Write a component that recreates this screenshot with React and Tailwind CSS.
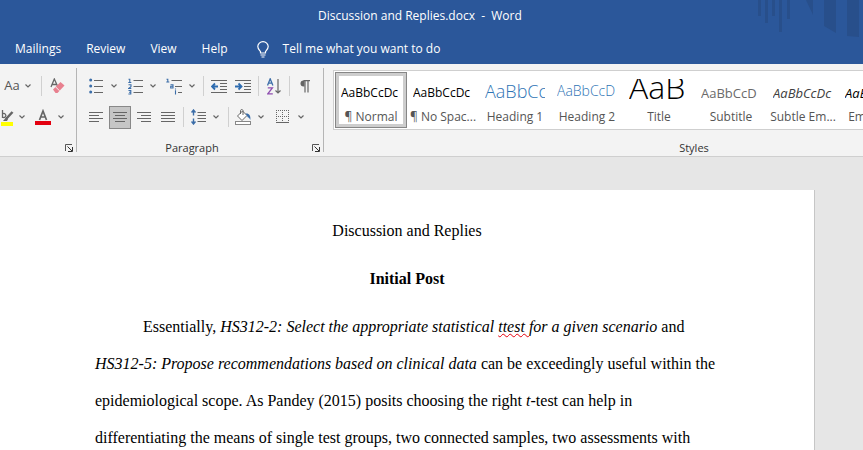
import React from "react"

const tabs = ["Mailings", "Review", "View", "Help"]

const styles = [
    { name: "¶ Normal", sample: "AaBbCcDc", look: "text-[12px] leading-7 text-black", selected: true },
    { name: "¶ No Spac...", sample: "AaBbCcDc", look: "text-[12px] leading-7 text-black" },
    { name: "Heading 1", sample: "AaBbCc", look: "text-[18px] leading-6 font-light text-[#2e74b5]" },
    { name: "Heading 2", sample: "AaBbCcD", look: "text-[14px] leading-6 font-light text-[#2e74b5]" },
    { name: "Title", sample: "AaB", look: "text-[32px] leading-4 font-light text-black" },
    { name: "Subtitle", sample: "AaBbCcD", look: "text-[13px] leading-7 text-[#6a6a6a]" },
    { name: "Subtle Em...", sample: "AaBbCcDc", look: "text-[13px] leading-7 italic text-[#404040]" },
    { name: "Emphasis", sample: "AaBbCcDc", look: "text-[13px] leading-7 italic text-black" },
]

const Separator = () => <div className="h-5 w-px bg-[#d0d0d0]"></div>

const Chevron = ({ label }) => (
    <button aria-label={label} className="flex h-[22px] w-4 items-center justify-center">
        <svg width="6" height="4" viewBox="0 0 6 4" fill="none" stroke="#666" strokeWidth="1.2">
            <path d="M0.5 0.5L3 3L5.5 0.5" />
        </svg>
    </button>
)

const Tool = ({ label, width = "w-5", active, children }) => (
    <button
        aria-label={label}
        className={`flex h-[23px] shrink-0 items-center justify-center ${width} ${active ? "border border-[#888] bg-[#c6c6c6]" : ""}`}
    >
        {children}
    </button>
)

const Launcher = ({ label }) => (
    <button aria-label={label} className="absolute right-[3px] bottom-0">
        <svg width="8" height="8" viewBox="0 0 8 8" fill="none" stroke="#555">
            <path d="M0.5 7V0.5H7" />
            <path d="M2.5 2.5L7 7M7.5 3V7.5H3" stroke="#333" />
        </svg>
    </button>
)

const AlignIcon = ({ lines }) => (
    <svg width="14" height="11" viewBox="0 0 14 11" stroke="#666">
        {lines.map(([from, to], i) => (
            <path key={i} d={`M${from} ${i * 3 + 0.5}H${to}`} />
        ))}
    </svg>
)

const BulletsIcon = () => (
    <svg width="14" height="16" viewBox="0 0 14 16">
        <g fill="#3b6da8">
            <circle cx="1.7" cy="2" r="1.5" />
            <circle cx="1.7" cy="8" r="1.5" />
            <circle cx="1.7" cy="14" r="1.5" />
        </g>
        <path d="M5 2.5H14M5 8.5H14M5 14.5H14" stroke="#666" />
    </svg>
)

const NumberingIcon = () => (
    <svg width="15" height="17" viewBox="0 0 15 17">
        <g fill="none" stroke="#3b6da8" strokeWidth="1.1">
            <path d="M0.5 1.2H1.8V4.5M0.3 4.5H3.3" />
            <path d="M0.5 6.8H3V8.6L0.7 10.4H3.3" />
            <path d="M0.5 12.5H2.8V16H0.4M1 14.2H2.8" />
        </g>
        <path d="M5.5 2.5H15M5.5 8.5H15M5.5 14.5H15" stroke="#666" />
    </svg>
)

const MultilevelIcon = () => (
    <svg width="17" height="17" viewBox="0 0 17 17">
        <g fill="none" stroke="#3b6da8" strokeWidth="1.1">
            <path d="M0.5 1.2H1.8V4M0.3 4H3.3" />
            <path d="M4.5 6.7H7V10M7 8.3H4.7V10H7.5" />
            <path d="M9.5 12.3V16.5M9.5 10.5V11.5" />
        </g>
        <path d="M5.5 2.5H16M9 8.5H16M12 14.5H16" stroke="#666" />
    </svg>
)

const IndentIcon = ({ right }) => (
    <svg width="16" height="13" viewBox="0 0 16 13" fill="none">
        <path d="M0 0.5H16M9 3.5H16M9 6.5H16M9 9.5H16M0 12.5H16" stroke="#666" />
        <path d={right ? "M0 6.5H6M3.5 3.5L6.5 6.5L3.5 9.5" : "M1 6.5H7M4 3.5L1 6.5L4 9.5"} stroke="#2e6cb0" strokeWidth="1.8" />
    </svg>
)

const SortIcon = () => (
    <svg width="14" height="17" viewBox="0 0 14 17" fill="none">
        <path d="M0.5 7.5L3.2 0.8L5.9 7.5M1.5 5.2H5" stroke="#3b6da8" strokeWidth="1.3" />
        <path d="M0.8 9.8H5.4L0.8 15.8H5.8" stroke="#8f4fb0" strokeWidth="1.3" />
        <path d="M11 1V15M8.5 12.5L11 15L13.5 12.5" stroke="#666" strokeWidth="1.2" />
    </svg>
)

const PilcrowIcon = () => (
    <svg width="10" height="13" viewBox="0 0 10 13">
        <path d="M4.5 0.5H3.5A3 3 0 0 0 3.5 6.5H4.5Z" fill="#666" />
        <path d="M3.5 0.7H10M5 0.5V12.5M8 0.5V12.5" stroke="#666" strokeWidth="1.2" />
    </svg>
)

const LineSpacingIcon = () => (
    <svg width="15" height="16" viewBox="0 0 15 16" fill="none">
        <path d="M2.5 1V6.5M0.5 3.5L2.5 1L4.5 3.5M2.5 9.5V15M0.5 12.5L2.5 15L4.5 12.5" stroke="#3b6da8" strokeWidth="1.4" />
        <path d="M6.5 3.5H15M6.5 6.5H15M6.5 9.5H15M6.5 12.5H15" stroke="#666" />
    </svg>
)

const ShadingIcon = () => (
    <svg width="17" height="16" viewBox="0 0 17 16" fill="none">
        <path d="M2.5 7L7.5 2L12 6.5L7 11.5Z" fill="#fff" stroke="#666" />
        <path d="M5.5 5V1.5A1.3 1.3 0 0 1 8 1.5V6" stroke="#666" />
        <path d="M10.5 4.5C14 4 16 6.5 15.3 11C14.5 9 13.500 8.5 13 8.5Z" fill="#3b6da8" />
        <rect x="0.5" y="12.5" width="15" height="3" fill="#fff" stroke="#888" />
    </svg>
)

const BordersIcon = () => (
    <svg width="14" height="14" viewBox="0 0 14 14" stroke="#666">
        <path d="M0 0.5H13M0 6.5H13M0.5 0V12M6.5 0V12M12.5 0V12" strokeDasharray="1 1" />
        <path d="M0 12.5H13" />
    </svg>
)

const EraserIcon = () => (
    <svg width="15" height="16" viewBox="0 0 15 16" fill="none">
        <path d="M1 9L4.3 1L7.5 8M2.5 6.5H6.5" stroke="#666" strokeWidth="1.3" />
        <path d="M3 11.5L10.500 4L14.5 7.5L7.5 15H5.5Z" fill="#e8808f" />
        <path d="M5.5 8.8L9.5 12.8" stroke="#f3f3f3" />
    </svg>
)

const HighlighterIcon = () => (
    <svg width="13" height="17" viewBox="0 0 13 17" fill="none">
        <path d="M1.5 1V9M1.5 5A2 2 0 1 1 1.5 8" stroke="#666" strokeWidth="1.3" />
        <path d="M11.5 3L5 10" stroke="#666" strokeWidth="2.5" />
        <path d="M5.5 8L2 12H6L7 10Z" fill="#666" />
        <rect y="13" width="12" height="4" fill="#ffff00" />
    </svg>
)

const FontColorIcon = () => (
    <svg width="16" height="16" viewBox="0 0 16 16" fill="none">
        <path d="M4.5 11L8 2L11.5 11M5.5 8H10.5" stroke="#666" strokeWidth="1.7" />
        <rect y="12" width="16" height="4" fill="#e3000f" />
    </svg>
)

const BulbIcon = () => (
    <svg width="12" height="17" viewBox="0 0 12 17" fill="none" stroke="#fff" strokeWidth="1.2">
        <path d="M3.5 12V10.5C2.5 9 0.8 8 0.8 5.6A5.2 5 0 0 1 11.2 5.6C11.2 8 9.5 9 8.5 10.5V12Z" />
        <path d="M3.5 14H8.5M4.5 16H7.5" />
    </svg>
)

const HeaderArt = () => (
    <svg className="absolute top-0 right-0" width="110" height="40" viewBox="0 0 110 40" fill="#284f8b">
        <path d="M5 0H8V16H5ZM12 0H15V23H12ZM19 0H22V16H19ZM26 0H29V32H26ZM34 0H37V19H34Z" />
        <path d="M53 0H60V15Z" />
        <path d="M71 0H83V33L71 26ZM94 0H106V37L94 36Z" />
    </svg>
)

const Header = () => (
    <header className="relative bg-[#2b579a] text-[12px] text-white">
        <HeaderArt />
        <div className="flex h-8 items-center pl-[318px] whitespace-pre">Discussion and Replies.docx  -  Word</div>
        <nav className="flex h-8 items-center gap-[25px] pt-[2px] pl-[15px]">
            {tabs.map((tab) => (
                <button key={tab}>{tab}</button>
            ))}
            <button className="flex items-center gap-[14px] pl-1">
                <BulbIcon />
                Tell me what you want to do
            </button>
        </nav>
    </header>
)

const FontGroup = () => (
    <section className="relative my-1 w-[77px] shrink-0 border-r border-[#b5b5b5]">
        <div className="flex h-9 items-center">
            <button className="w-5 pl-1 text-[13px] text-[#555]">Aa</button>
            <Chevron label="Change case options" />
            <div className="mx-[5px]"><Separator /></div>
            <Tool label="Clear formatting"><EraserIcon /></Tool>
        </div>
        <div className="flex h-[26px] items-center">
            <Tool label="Highlight color" width="w-[14px]"><HighlighterIcon /></Tool>
            <Chevron label="Highlight options" />
            <div className="ml-[3px]"><Tool label="Font color"><FontColorIcon /></Tool></div>
            <Chevron label="Font color options" />
        </div>
        <Launcher label="Font settings" />
    </section>
)

const ParagraphGroup = () => (
    <section className="relative my-1 flex w-[247px] shrink-0 flex-col border-r border-[#b5b5b5]">
        <div className="flex h-9 items-center gap-[3px] pl-[9px]">
            <div className="flex">
                <Tool label="Bullets"><BulletsIcon /></Tool>
                <Chevron label="Bullet options" />
            </div>
            <div className="flex">
                <Tool label="Numbering"><NumberingIcon /></Tool>
                <Chevron label="Numbering options" />
            </div>
            <div className="flex">
                <Tool label="Multilevel list"><MultilevelIcon /></Tool>
                <Chevron label="Multilevel list options" />
            </div>
            <Separator />
            <div className="flex">
                <Tool label="Decrease indent" width="w-6"><IndentIcon /></Tool>
                <Tool label="Increase indent" width="w-6"><IndentIcon right /></Tool>
            </div>
            <Separator />
            <Tool label="Sort" width="w-6"><SortIcon /></Tool>
            <Separator />
            <Tool label="Show paragraph marks" width="w-6"><PilcrowIcon /></Tool>
        </div>
        <div className="flex h-[26px] items-center gap-1 pl-2">
            <div className="flex gap-[2px]">
                <Tool label="Align left" width="w-[22px]"><AlignIcon lines={[[0, 14], [0, 10], [0, 14], [0, 10]]} /></Tool>
                <Tool label="Center" width="w-[22px]" active><AlignIcon lines={[[0, 14], [2, 12], [0, 14], [2, 12]]} /></Tool>
                <Tool label="Align right" width="w-[22px]"><AlignIcon lines={[[0, 14], [4, 14], [0, 14], [4, 14]]} /></Tool>
                <Tool label="Justify" width="w-[22px]"><AlignIcon lines={[[0, 14], [0, 14], [0, 14], [0, 14]]} /></Tool>
            </div>
            <Separator />
            <div className="flex">
                <Tool label="Line spacing"><LineSpacingIcon /></Tool>
                <Chevron label="Line spacing options" />
            </div>
            <Separator />
            <div className="flex">
                <Tool label="Shading"><ShadingIcon /></Tool>
                <Chevron label="Shading options" />
            </div>
            <div className="flex">
                <Tool label="Borders"><BordersIcon /></Tool>
                <Chevron label="Border options" />
            </div>
        </div>
        <p className="mt-auto pr-4 text-center text-[11px] leading-2 text-[#333]">Paragraph</p>
        <Launcher label="Paragraph settings" />
    </section>
)

const StyleCard = ({ style }) => (
    <button className={`flex h-14 w-[72px] shrink-0 flex-col items-center ${style.selected ? "border border-[#868686] ring-3 ring-[#cdcdcd] ring-inset" : "border border-transparent"}`}>
        <span className={`mt-[6px] h-[30px] w-[60px] overflow-hidden text-left whitespace-nowrap ${style.look}`}>{style.sample}</span>
        <span className="text-[12px] leading-4 whitespace-nowrap text-[#555]">{style.name}</span>
    </button>
)

const StylesGroup = () => (
    <section className="my-1 flex w-[740px] shrink-0 flex-col">
        <div className="mt-[2px] ml-[9px] flex border border-[#cfcfcf] bg-white p-px">
            {styles.map((style) => (
                <StyleCard key={style.name} style={style} />
            ))}
        </div>
        <p className="mt-auto text-center text-[11px] leading-2 text-[#333]">Styles</p>
    </section>
)

const Document = () => (
    <main className="flex flex-1 flex-col bg-[#e6e6e6] pt-[33px] pr-12">
        <article className="flex-1 border-r border-[#c6c6c6] bg-white px-[95px] pt-[22px] font-['Liberation_Serif',serif] text-[16px] leading-[37px] text-black">
            <p className="mb-[11px] text-center">Discussion and Replies</p>
            <p className="mb-[11px] text-center font-bold">Initial Post</p>
            <p className="indent-12">
                Essentially, <em>HS312-2: Select the appropriate statistical <span className="underline decoration-red-600 decoration-wavy decoration-1 underline-offset-1">ttest </span>for a given scenario</em> and{" "}
                <em>HS312-5: Propose recommendations based on clinical data</em> can be exceedingly useful within the
                epidemiological scope. As Pandey (2015) posits choosing the right <em>t</em>-test can help in
                differentiating the means of single test groups, two connected samples, two assessments with
            </p>
        </article>
    </main>
)

const App = () => {
    return (
        <div className="flex h-screen flex-col overflow-hidden font-['Open_Sans',sans-serif]">
            <Header />
            <div className="flex h-[93px] shrink-0 overflow-hidden border-b border-[#cfcfcf] bg-[#f3f3f3]">
                <FontGroup />
                <ParagraphGroup />
                <StylesGroup />
            </div>
            <Document />
        </div>
    )
}

export default App
